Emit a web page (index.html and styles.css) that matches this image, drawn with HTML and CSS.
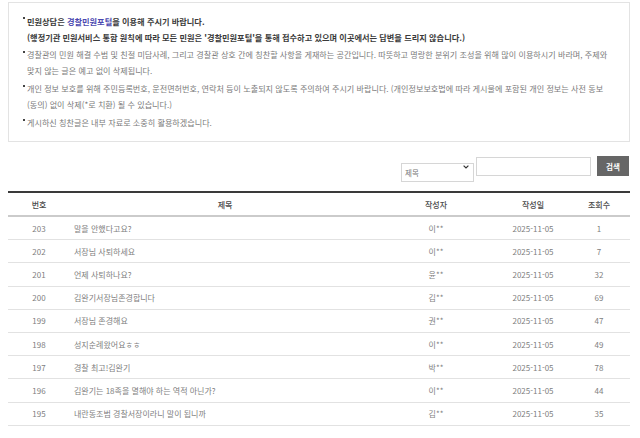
FILE: index.html
```html
<!DOCTYPE html>
<html lang="ko">
<head>
<meta charset="utf-8">
<title>칭찬합시다</title>
<link rel="stylesheet" href="styles.css">
</head>
<body>
<div class="page">
  <div class="notice">
    <ul class="notice-list">
      <li class="strong"><span>민원상담은 <a class="link" href="#">경찰민원포털</a>을 이용해 주시기 바랍니다.<br>(행정기관 민원서비스 통합 원칙에 따라 모든 민원은 '경찰민원포털'을 통해 접수하고 있으며 이곳에서는 답변을 드리지 않습니다.)</span></li>
      <li><span>경찰관의 민원 해결 수범 및 친절 미담사례, 그리고 경찰관 상호 간에 칭찬할 사항을 게재하는 공간입니다. 따뜻하고 명랑한 분위기 조성을 위해 많이 이용하시기 바라며, 주제와<br>맞지 않는 글은 예고 없이 삭제됩니다.</span></li>
      <li><span>개인 정보 보호를 위해 주민등록번호, 운전면허번호, 연락처 등이 노출되지 않도록 주의하여 주시기 바랍니다. (개인정보보호법에 따라 게시물에 포함된 개인 정보는 사전 동보<br>(동의) 없이 삭제(*로 치환) 될 수 있습니다.)</span></li>
      <li><span>게시하신 칭찬글은 내부 자료로 소중히 활용하겠습니다.</span></li>
    </ul>
  </div>

  <form class="search">
    <div class="select-wrap">
      <select class="select"><option>제목</option><option>내용</option><option>작성자</option></select>
      <svg class="chevron" width="6" height="4" viewBox="0 0 6 4"><path d="M0.6 0.6 L3 3 L5.4 0.6" fill="none" stroke="#333" stroke-width="1.2"/></svg>
    </div>
    <input class="input" type="text">
    <button class="btn" type="button">검색</button>
  </form>

  <div class="board">
    <div class="row head">
      <div class="c num">번호</div>
      <div class="c title-h">제목</div>
      <div class="c">작성자</div>
      <div class="c">작성일</div>
      <div class="c views">조회수</div>
    </div>
    <div class="row"><div class="c num">203</div><div class="c title">말을 안했다고요?</div><div class="c">이**</div><div class="c">2025-11-05</div><div class="c views">1</div></div>
    <div class="row"><div class="c num">202</div><div class="c title">서장님 사퇴하세요</div><div class="c">이**</div><div class="c">2025-11-05</div><div class="c views">7</div></div>
    <div class="row"><div class="c num">201</div><div class="c title">언제 사퇴하나요?</div><div class="c">윤**</div><div class="c">2025-11-05</div><div class="c views">32</div></div>
    <div class="row"><div class="c num">200</div><div class="c title">김완기서장님존경합니다</div><div class="c">김**</div><div class="c">2025-11-05</div><div class="c views">69</div></div>
    <div class="row"><div class="c num">199</div><div class="c title">서장님 존경해요</div><div class="c">권**</div><div class="c">2025-11-05</div><div class="c views">47</div></div>
    <div class="row"><div class="c num">198</div><div class="c title">성지순례왔어요ㅎㅎ</div><div class="c">이**</div><div class="c">2025-11-05</div><div class="c views">49</div></div>
    <div class="row"><div class="c num">197</div><div class="c title">경찰 최고!김완기</div><div class="c">박**</div><div class="c">2025-11-05</div><div class="c views">78</div></div>
    <div class="row"><div class="c num">196</div><div class="c title">김완기는 18족을 멸해야 하는 역적 아닌가?</div><div class="c">이**</div><div class="c">2025-11-05</div><div class="c views">44</div></div>
    <div class="row"><div class="c num">195</div><div class="c title">내란동조범 경찰서장이라니 말이 됩니까</div><div class="c">김**</div><div class="c">2025-11-05</div><div class="c views">35</div></div>
  </div>
</div>
</body>
</html>
```

FILE: styles.css
```css
* { box-sizing: border-box; }
html, body { margin: 0; padding: 0; background: #fff; }
body {
  font-family: "Noto Sans CJK KR", "Noto Sans", sans-serif;
  color: #777;
}
.page {
  width: 622px;
  margin: 2px 0 0 8px;
}
.notice {
  border: 1px solid #e3e3e3;
  padding: 10px 8px 10px 14px;
}
.notice-list {
  list-style: none;
  margin: 0;
  padding: 0;
  font-size: 8.1px;
  line-height: 16px;
  color: #7a7a7a;
}
.notice-list li {
  display: flex;
  margin-top: 2px;
  white-space: nowrap;
}
.notice-list li:first-child { margin-top: 0; }
.notice-list li::before {
  content: "";
  flex: none;
  width: 2px;
  height: 2px;
  margin: 4px 2px 0 0;
  background: #444;
}
.notice-list li.strong {
  font-weight: 700;
  font-size: 8.2px;
  color: #3a3a3a;
}
.link {
  color: #4b48b0;
  text-decoration: none;
}

.search {
  display: flex;
  justify-content: flex-end;
  align-items: stretch;
  margin: 15px 1px 0 0;
  height: 19px;
}
.select-wrap {
  position: relative;
  width: 73px;
  margin-right: 2px;
}
.select {
  appearance: none;
  -webkit-appearance: none;
  width: 100%;
  height: 100%;
  border: 1px solid #d6d6d6;
  background: #fff;
  font: inherit;
  font-size: 7.5px;
  color: #777;
  padding: 0 0 0 3px;
  margin: 0;
  border-radius: 0;
}
.chevron {
  position: absolute;
  right: 5px;
  top: 8px;
  pointer-events: none;
}
.input {
  width: 115px;
  height: 100%;
  border: 1px solid #d6d6d6;
  margin: 0 6px 0 0;
  padding: 0;
  border-radius: 0;
}
.btn {
  width: 32px;
  height: 20px;
  margin-top: -1px;
  border: 0;
  padding: 0;
  background: #666;
  color: #fff;
  font: inherit;
  font-size: 7.5px;
  font-weight: 700;
  border-radius: 0;
}

.board {
  margin-top: 15px;
  border-top: 2px solid #3a3a3a;
  font-size: 8px;
}
.row {
  display: grid;
  grid-template-columns: 62px 310px 112px 82px 1fr;
  height: 23.2px;
  align-items: center;
  border-bottom: 1px solid #e2e2e2;
  color: #808080;
}
.row.head {
  height: 24px;
  border-bottom: 2px solid #cbcbcb;
  color: #4a4a4a;
  font-weight: 500;
}
.c {
  text-align: center;
  white-space: nowrap;
}
.c.title {
  text-align: left;
  padding-left: 4px;
}
.c.views { padding-right: 6px; }
```
